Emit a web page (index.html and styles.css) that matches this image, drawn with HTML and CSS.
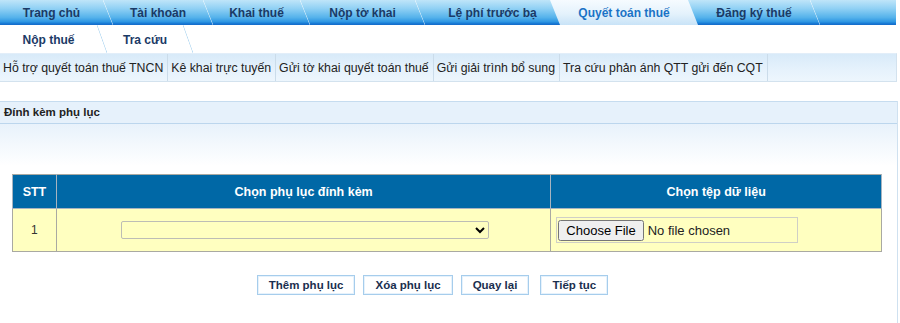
FILE: index.html
```html
<!DOCTYPE html>
<html lang="vi">
<head>
<meta charset="utf-8">
<title>Quyết toán thuế - Đính kèm phụ lục</title>
<link rel="stylesheet" href="styles.css">
</head>
<body>
<div class="page">
  <nav class="tabs">
    <a class="tab t1">Trang chủ</a><span class="sep"></span>
    <a class="tab t2">Tài khoản</a><span class="sep"></span>
    <a class="tab t3">Khai thuế</a><span class="sep"></span>
    <a class="tab t4">Nộp tờ khai</a><span class="sep"></span>
    <a class="tab t5">Lệ phí trước bạ</a>
    <a class="tab t6 active">Quyết toán thuế</a>
    <a class="tab t7">Đăng ký thuế</a><span class="sep"></span>
    <span class="tab t8"></span>
  </nav>
  <nav class="subtabs">
    <a class="tab s1">Nộp thuế</a><span class="sep"></span>
    <a class="tab s2">Tra cứu</a><span class="sep"></span>
  </nav>
  <nav class="menu">
    <a class="item">Hỗ trợ quyết toán thuế TNCN</a>
    <a class="item">Kê khai trực tuyến</a>
    <a class="item">Gửi tờ khai quyết toán thuế</a>
    <a class="item">Gửi giải trình bổ sung</a>
    <a class="item">Tra cứu phản ánh QTT gửi đến CQT</a>
  </nav>
  <section class="panel">
    <div class="panel-head">Đính kèm phụ lục</div>
    <div class="panel-body">
      <table class="grid">
        <thead>
          <tr>
            <th class="c1">STT</th>
            <th class="c2">Chọn phụ lục đính kèm</th>
            <th class="c3">Chọn tệp dữ liệu</th>
          </tr>
        </thead>
        <tbody>
          <tr>
            <td class="c1">1</td>
            <td class="c2"><select class="pick"><option></option></select></td>
            <td class="c3"><input class="file" type="file"></td>
          </tr>
        </tbody>
      </table>
      <div class="actions">
        <button class="btn">Thêm phụ lục</button>
        <button class="btn">Xóa phụ lục</button>
        <button class="btn">Quay lại</button>
        <button class="btn last">Tiếp tục</button>
      </div>
    </div>
  </section>
</div>
</body>
</html>
```
FILE: styles.css
```css
* { box-sizing: border-box; }
html, body { margin: 0; padding: 0; background: #fff; }
body { font-family: "Liberation Sans", Arial, sans-serif; color: #222; }
.page { width: 900px; }

.tabs {
  display: flex;
  width: 896px;
  height: 25px;
  background: linear-gradient(#bfe5f9 0%, #8fd0f4 35%, #55b2eb 70%, #2c95e2 88%, #1a7fd8 92%, #1469c8 100%);
}
.tab {
  flex: none;
  display: flex;
  align-items: center;
  justify-content: center;
  font-weight: bold;
  font-size: 12px;
  color: #1b3a66;
  text-decoration: none;
  white-space: nowrap;
}
.sep {
  flex: none;
  width: 10px;
  background: linear-gradient(to top right, transparent calc(50% - 0.7px), rgba(255,255,255,0.6) 50%, transparent calc(50% + 0.7px));
}
.t1 { width: 103px; }
.t2 { width: 90px; }
.t3 { width: 87px; }
.t4 { width: 105px; }
.t5 { width: 125px; padding-left: 10px; }
.t6 { width: 148px; }
.t7 { width: 112px; }
.t8 { width: 76px; }
.tab.active {
  color: #1b73c6;
  background: linear-gradient(#f6fbff 0%, #e4f2fc 55%, #c8e3f7 100%);
  clip-path: polygon(0 0, calc(100% - 10px) 0, 100% 100%, 10px 100%);
}

.subtabs {
  display: flex;
  height: 28px;
  background: #fff;
}
.subtabs .sep {
  background: linear-gradient(to top right, transparent calc(50% - 0.7px), #b9dbf2 50%, transparent calc(50% + 0.7px));
}
.s1 { width: 97px; padding-top: 1px; }
.s2 { width: 76px; padding-top: 1px; }

.menu {
  display: flex;
  width: 897px;
  height: 29px;
  background: linear-gradient(#d8eaf9 0%, #e6f2fc 60%, #edf6fd 100%);
  border-top: 1px solid #e2eef9;
  border-bottom: 1px solid #d3e2ee;
  border-right: 1px solid #d3e2ee;
}
.item {
  display: flex;
  align-items: center;
  padding: 0 4px 0 3px;
  border-right: 1px solid #cbdcea;
  font-size: 12.3px;
  color: #222;
  white-space: nowrap;
}

.panel {
  margin-top: 19px;
  width: 898px;
  border-right: 1px solid #cfe1f0;
}
.panel-head {
  height: 23px;
  border-top: 1px solid #c6dcef;
  border-bottom: 1px solid #bcd6ed;
  background: #e6f1fb;
  padding-left: 4px;
  font-size: 11.5px;
  font-weight: bold;
  line-height: 21px;
  color: #222;
}
.panel-body {
  background: linear-gradient(#e8f2fb 0px, #ffffff 42px) no-repeat;
  padding: 50px 16px 30px 12px;
}

.grid {
  border-collapse: collapse;
  width: 870px;
  border: 1px solid #a9a9a2;
}
.grid th {
  height: 34px;
  background: #0068a6;
  color: #fff;
  font-size: 12.5px;
  font-weight: bold;
  border: 1px solid #a7b4c0;
  border-top-color: #a9a9a2;
  text-align: center;
}
.grid td {
  height: 43px;
  background: #ffffc0;
  border: 1px solid #a9a9a2;
  font-size: 12px;
  color: #333;
}
.c1 { width: 44px; text-align: center; }
.c2 { width: 495px; text-align: center; }
.c3 { width: 331px; text-align: left; }
td.c3 { padding-left: 5px; }

.pick {
  width: 368px;
  height: 18px;
  margin-left: 2px;
  background: #ffffc0;
  border: 1px solid #bdbdb5;
  border-radius: 2px;
  font-size: 12px;
  vertical-align: middle;
}
.file {
  width: 242px;
  height: 26px;
  padding: 2px 1px;
  background: #ffffc0;
  border: 1px solid #cfcfc6;
  font-family: "Liberation Sans", Arial, sans-serif;
  font-size: 13px;
  color: #222;
  vertical-align: middle;
}

.actions {
  display: flex;
  justify-content: center;
  gap: 8px;
  margin-top: 23px;
  padding-right: 28px;
}
.btn {
  height: 20px;
  padding: 0 11px;
  background: #fff;
  border: 1px solid #a6cdec;
  box-shadow: inset 0 0 0 1px #e6f2fc;
  font-family: "Liberation Sans", Arial, sans-serif;
  font-size: 11.5px;
  font-weight: bold;
  color: #1b2f4f;
  border-radius: 0;
}
.btn.last { margin-left: 3px; }
```
